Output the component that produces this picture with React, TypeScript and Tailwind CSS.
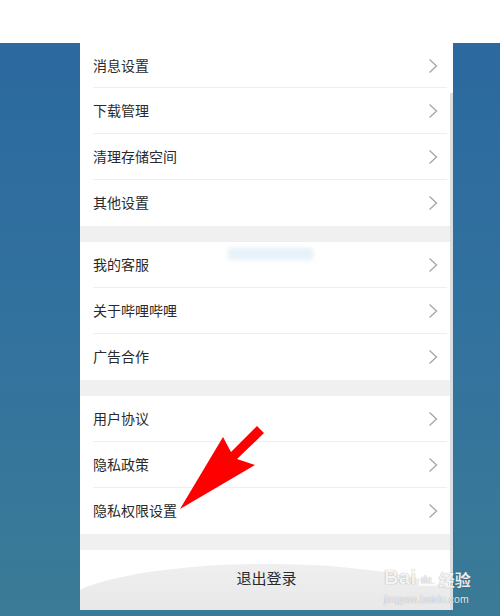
const groups: string[][] = [
  ['消息设置', '下载管理', '清理存储空间', '其他设置'],
  ['我的客服', '关于哔哩哔哩', '广告合作'],
  ['用户协议', '隐私政策', '隐私权限设置'],
]

function Chevron() {
  return (
    <svg width="10" height="16" viewBox="0 0 10 16" className="shrink-0">
      <path d="M1.5 1.5 L8.5 8 L1.5 14.5" fill="none" stroke="#a8a8a8" strokeWidth="1.4" />
    </svg>
  )
}

function Row({ label, first, last }: { label: string; first?: boolean; last?: boolean }) {
  return (
    <div className={`relative flex items-center pl-[13px] pr-[15px] ${first ? 'h-[45px]' : 'h-[46px]'}`}>
      <span className="flex-1 text-[14px] leading-none text-[#2a2a2a] pb-[2px]">{label}</span>
      <Chevron />
      {!last && <div className="absolute bottom-0 left-[13px] right-[6px] h-px bg-[#efefef]" />}
    </div>
  )
}

export default function App() {
  return (
    <div
      className="relative w-[500px] h-[616px] overflow-hidden bg-white"
      style={{ fontFamily: '"Noto Sans CJK SC", "Noto Sans", sans-serif' }}
    >
      {/* white header band */}
      <div className="h-[43px] bg-white" />

      {/* blue backdrop with phone screen */}
      <div className="h-[573px] bg-gradient-to-b from-[#2b699e] via-[#32729e] to-[#3b7b97] pl-[80px]">
        <div className="relative w-[373px] h-[567px] bg-white overflow-hidden">
          {groups.map((items, gi) => (
            <div key={gi}>
              {items.map((label, i) => (
                <Row key={label} label={label} first={gi === 0 && i === 0} last={i === items.length - 1} />
              ))}
              <div className="h-[16px] bg-[#f0f0f0]" />
            </div>
          ))}

          {/* logout */}
          <div className="relative h-[60px] flex items-center justify-center">
            <div className="absolute left-[-20px] right-[-20px] top-[14px] h-[90px] rounded-[50%] bg-gradient-to-b from-[#efefef] to-[#e2e2e2]" />
            <span className="relative text-[15px] leading-none text-[#2a2a2a] pb-[6px]">退出登录</span>
          </div>

          {/* scrollbar strip */}
          <div className="absolute right-0 top-[50px] bottom-0 w-[3px] bg-[#d9dee3]" />

          {/* ghost blur from video */}
          <div className="absolute left-[148px] top-[205px] w-[85px] h-[12px] bg-[#e6f1f8] blur-[2px]" />
        </div>
      </div>

      {/* red arrow */}
      <svg className="absolute left-0 top-0" width="500" height="616" viewBox="0 0 500 616">
        <polygon
          points="180,509 223,437 231,452 257,426 264,433 237,459 255,465"
          fill="#ff0000"
        />
      </svg>

      {/* watermark */}
      <div
        className="absolute left-[384px] top-[563px] text-white/90 leading-none"
        style={{ textShadow: '0 0 1px rgba(0,0,0,0.45)' }}
      >
        <div className="flex items-end">
          <span className="text-[20px] font-bold tracking-[0.5px]" style={{ fontFamily: '"Liberation Sans", sans-serif' }}>Bai</span>
          <span className="relative w-[22px] h-[24px]">
            <svg width="22" height="24" viewBox="0 0 22 24" className="absolute left-0 top-0">
              <g fill="none" stroke="white" strokeOpacity="0.95" strokeWidth="1.5">
                <ellipse cx="5" cy="7" rx="2.2" ry="2.8" />
                <ellipse cx="11" cy="3.5" rx="2.2" ry="2.8" />
                <ellipse cx="17" cy="7" rx="2.2" ry="2.8" />
                <path d="M2.5 22 Q2.5 12.5 11 11 Q19.5 12.5 19.5 22 Z" />
              </g>
            </svg>
            <span className="absolute left-[4px] bottom-[3px] text-[9px] font-bold" style={{ fontFamily: '"Liberation Sans", sans-serif' }}>du</span>
          </span>
          <span className="text-[16px] font-bold">经验</span>
        </div>
        <div className="mt-[7px] text-[10.5px]" style={{ fontFamily: '"Liberation Sans", sans-serif' }}>jingyan.baidu.com</div>
      </div>
    </div>
  )
}
